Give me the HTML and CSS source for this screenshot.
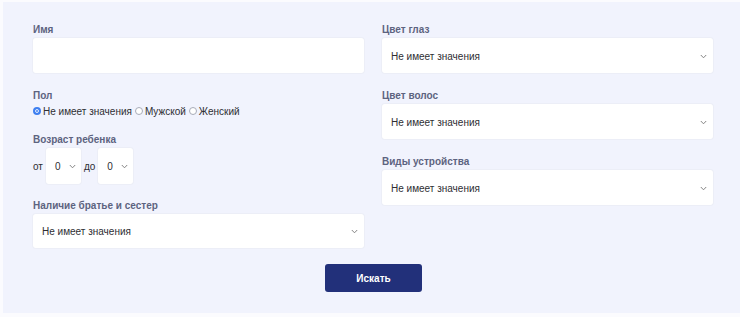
FILE: index.html
```html
<!DOCTYPE html>
<html lang="ru">
<head>
<meta charset="utf-8">
<title>Поиск</title>
<link rel="stylesheet" href="styles.css">
</head>
<body>
<form class="panel">
  <div class="grid">
    <div class="col">
      <div class="field">
        <div class="label">Имя</div>
        <div class="input"></div>
      </div>
      <div class="field field-sex">
        <div class="label">Пол</div>
        <div class="radios">
          <span class="radio checked"></span><span class="rtext">Не имеет значения</span>
          <span class="radio"></span><span class="rtext">Мужской</span>
          <span class="radio"></span><span class="rtext">Женский</span>
        </div>
      </div>
      <div class="field field-age">
        <div class="label">Возраст ребенка</div>
        <div class="age">
          <span class="word">от</span>
          <div class="select small"><span>0</span><svg class="chev" width="7" height="5" viewBox="0 0 7 5"><path d="M0.8 1 L3.5 3.8 L6.2 1" fill="none" stroke="#777" stroke-width="0.9"/></svg></div>
          <span class="word">до</span>
          <div class="select small"><span>0</span><svg class="chev" width="7" height="5" viewBox="0 0 7 5"><path d="M0.8 1 L3.5 3.8 L6.2 1" fill="none" stroke="#777" stroke-width="0.9"/></svg></div>
        </div>
      </div>
      <div class="field field-sib">
        <div class="label">Наличие братье и сестер</div>
        <div class="select"><span>Не имеет значения</span><svg class="chev" width="7" height="5" viewBox="0 0 7 5"><path d="M0.8 1 L3.5 3.8 L6.2 1" fill="none" stroke="#777" stroke-width="0.9"/></svg></div>
      </div>
    </div>
    <div class="col">
      <div class="field">
        <div class="label">Цвет глаз</div>
        <div class="select"><span>Не имеет значения</span><svg class="chev" width="7" height="5" viewBox="0 0 7 5"><path d="M0.8 1 L3.5 3.8 L6.2 1" fill="none" stroke="#777" stroke-width="0.9"/></svg></div>
      </div>
      <div class="field">
        <div class="label">Цвет волос</div>
        <div class="select"><span>Не имеет значения</span><svg class="chev" width="7" height="5" viewBox="0 0 7 5"><path d="M0.8 1 L3.5 3.8 L6.2 1" fill="none" stroke="#777" stroke-width="0.9"/></svg></div>
      </div>
      <div class="field">
        <div class="label">Виды устройства</div>
        <div class="select"><span>Не имеет значения</span><svg class="chev" width="7" height="5" viewBox="0 0 7 5"><path d="M0.8 1 L3.5 3.8 L6.2 1" fill="none" stroke="#777" stroke-width="0.9"/></svg></div>
      </div>
    </div>
  </div>
  <div class="actions">
    <button type="button" class="btn">Искать</button>
  </div>
</form>
</body>
</html>
```
FILE: styles.css
```css
html, body {
  margin: 0;
  padding: 0;
  background: #fbfbfe;
}
body {
  font-family: "Liberation Sans", Arial, sans-serif;
  color: #2e2e33;
}
.panel {
  margin: 2px 0 0 3px;
  height: 311px;
  box-sizing: border-box;
  background: #f1f3fd;
  padding: 20px 27px 0 30px;
}
.grid {
  display: grid;
  grid-template-columns: 331px 331px;
  column-gap: 18px;
}
.col {
  display: flex;
  flex-direction: column;
}
.field {
  display: flex;
  flex-direction: column;
  margin-bottom: 15px;
}
.label {
  font-size: 10px;
  font-weight: 700;
  line-height: 14px;
  color: #5d6380;
  padding-top: 1px;
  margin-bottom: 1px;
}
.input, .select {
  height: 35px;
  background: #ffffff;
  border-radius: 3px;
  box-shadow: 0 0 0 1px #eceef7;
}
.select {
  display: flex;
  align-items: center;
  justify-content: space-between;
  padding: 1px 6px 0 9px;
  box-sizing: border-box;
  font-size: 10px;
  color: #2e2e33;
}
.field-sex {
  margin-bottom: 14px;
}
.radios {
  display: flex;
  align-items: center;
  height: 14px;
  font-size: 10px;
}
.radio {
  border-radius: 50%;
  border: 1px solid #a7abb8;
  background: #fff;
  margin-right: 2px;
  box-sizing: border-box;
  width: 8px;
  height: 8px;
}
.radio.checked {
  border: 2px solid #3f7ff0;
  background: #3f7ff0;
  box-shadow: inset 0 0 0 1px #fff;
}
.rtext {
  margin-right: 3px;
}
.field-age {
  margin-bottom: 14px;
}
.age {
  display: flex;
  align-items: center;
  font-size: 10px;
}
.word {
  margin-right: 3px;
}
.select.small {
  width: 35px;
  height: 36px;
  padding: 1px 5px 0 9px;
  margin-right: 3px;
}
.field-sib .select {
  height: 34px;
}
.actions {
  display: flex;
  justify-content: center;
  margin-top: 1px;
}
.btn {
  width: 97px;
  height: 28px;
  margin-left: 1px;
  background: #22307a;
  color: #fff;
  border: none;
  border-radius: 3px;
  font-family: "Liberation Sans", Arial, sans-serif;
  font-size: 10px;
  font-weight: 700;
}
```
